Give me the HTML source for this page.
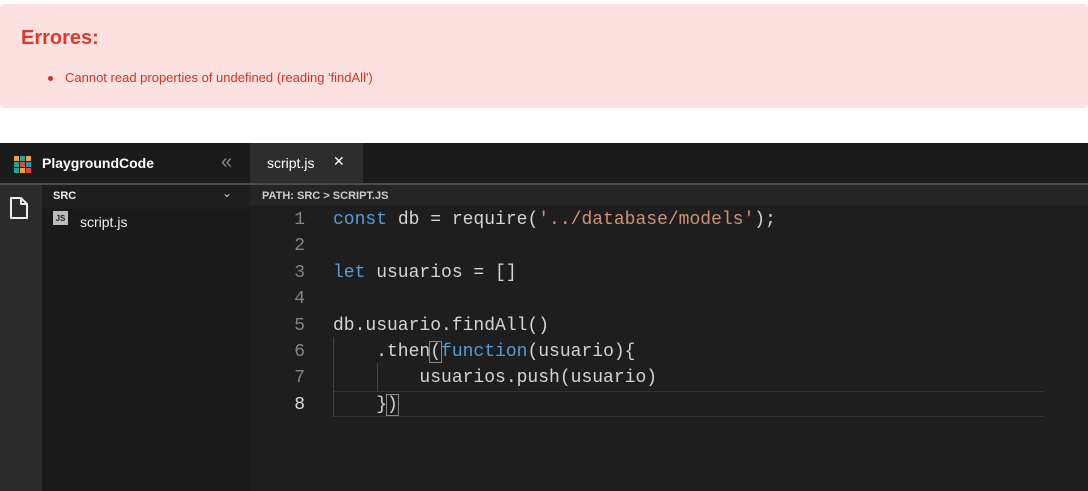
<!DOCTYPE html>
<html><head><meta charset="utf-8"><style>
body{margin:0;width:1088px;height:491px;background:#fff;position:relative;overflow:hidden;font-family:"Liberation Sans",sans-serif}
.err{position:absolute;left:0;top:4px;width:1088px;height:104px;background:#fde1e1;border-radius:4px}
.err h3{position:absolute;left:21px;top:23px;margin:0;font-size:20px;font-weight:bold;color:#dc3b26}
.err li{position:absolute;left:65px;top:66px;font-size:13px;color:#d5331f}
.err .dot{position:absolute;left:48px;top:72px;width:5px;height:5px;border-radius:50%;background:#d5331f}
.ed{position:absolute;left:0;top:143px;width:1088px;height:348px;background:#1e1e1e}
.hdr{position:absolute;left:0;top:0;width:1088px;height:40px;background:#1b1b1b}
.line{position:absolute;left:0;top:40px;width:1088px;height:2px;background:#4a4d52}
.act{position:absolute;left:0;top:42px;width:42px;height:306px;background:#2c2c2c}
.exp{position:absolute;left:42px;top:42px;width:208px;height:306px;background:#1a1a1a}
.tab{position:absolute;left:250px;top:0;width:113px;height:40px;background:#2d2d2d;color:#fff;font-size:14px}
.code{position:absolute;left:250px;top:67px;font-family:"Liberation Mono",monospace;font-size:18px;color:#d4d4d4}
.ln{position:absolute;width:55px;text-align:right;color:#858585}
.tx{position:absolute;left:83px;white-space:pre}
.k{color:#569cd6}.s{color:#ce9178}
</style></head><body>
<div class="err"><h3>Errores:</h3><div class="dot"></div><li style="list-style:none">Cannot read properties of undefined (reading 'findAll')</li></div>
<div class="ed">
<div class="hdr"></div>
<svg style="position:absolute;left:14px;top:13px" width="18" height="18">
<rect x="0" y="0" width="5" height="5" fill="#f0a04b"/><rect x="6" y="0" width="5" height="5" fill="#2aa198"/><rect x="12" y="0" width="5" height="5" fill="#f0a04b"/>
<rect x="0" y="6" width="5" height="5" fill="#2aa198"/><rect x="6" y="6" width="5" height="5" fill="#e04848"/><rect x="12" y="6" width="5" height="5" fill="#2a8fb8"/>
<rect x="0" y="12" width="5" height="5" fill="#2aa198"/><rect x="6" y="12" width="5" height="5" fill="#f0a04b"/><rect x="12" y="12" width="5" height="5" fill="#e04848"/></svg>
<div style="position:absolute;left:42px;top:12px;color:#fff;font-weight:bold;font-size:14px">PlaygroundCode</div>
<div style="position:absolute;left:221px;top:8px;color:#888;font-size:20px">«</div>
<div class="tab"><span style="position:absolute;left:17px;top:12px">script.js</span><span style="position:absolute;left:83px;top:10px">✕</span></div>
<div class="line"></div>
<div class="act"></div>
<svg style="position:absolute;left:9px;top:53px" width="20" height="24"><path d="M2 2h10l6 6v14H2z M12 2v6h6" fill="none" stroke="#eee" stroke-width="2" stroke-linejoin="round"/></svg>
<div class="exp"></div>
<div style="position:absolute;left:42px;top:42px;width:208px;height:24px;background:#1e1e1e"></div>
<div style="position:absolute;left:53px;top:47px;color:#eee;font-size:11px;font-weight:bold">SRC</div>
<div style="position:absolute;left:222px;top:43px;color:#ccc;font-size:12px">⌄</div>
<div style="position:absolute;left:53px;top:68px;width:15px;height:14px;background:#bbb;color:#222;font-size:8px;font-weight:bold;text-align:center;line-height:16px">JS</div>
<div style="position:absolute;left:80px;top:71px;color:#eee;font-size:14px">script.js</div>
<div style="position:absolute;left:250px;top:42px;width:838px;height:20px;background:#252526"></div>
<div style="position:absolute;left:262px;top:47px;color:#ccc;font-size:11px;font-weight:bold">PATH: SRC &gt; SCRIPT.JS</div>
<div style="position:absolute;left:333px;top:248px;width:711px;height:24px;border-top:1px solid #333;border-bottom:1px solid #333"></div>
<div style="position:absolute;left:333px;top:194px;width:1px;height:80px;background:#444"></div>
<div style="position:absolute;left:377px;top:220px;width:1px;height:28px;background:#444"></div>
<div class="code">
<div class="ln" style="top:0">1</div><div class="tx" style="top:0"><span class="k">const</span> db = require(<span class="s">'../database/models'</span>);</div>
<div class="ln" style="top:26.4px">2</div>
<div class="ln" style="top:52.8px">3</div><div class="tx" style="top:52.8px"><span class="k">let</span> usuarios = []</div>
<div class="ln" style="top:79.2px">4</div>
<div class="ln" style="top:105.6px">5</div><div class="tx" style="top:105.6px">db.usuario.findAll()</div>
<div class="ln" style="top:132px">6</div><div class="tx" style="top:132px">    .then<span style="outline:1px solid #888">(</span><span class="k">function</span>(usuario){</div>
<div class="ln" style="top:158.4px">7</div><div class="tx" style="top:158.4px">        usuarios.push(usuario)</div>
<div class="ln" style="top:184.8px;color:#ddd">8</div><div class="tx" style="top:184.8px">    }<span style="outline:1px solid #888">)</span></div>
</div>
</div>
</body></html>
